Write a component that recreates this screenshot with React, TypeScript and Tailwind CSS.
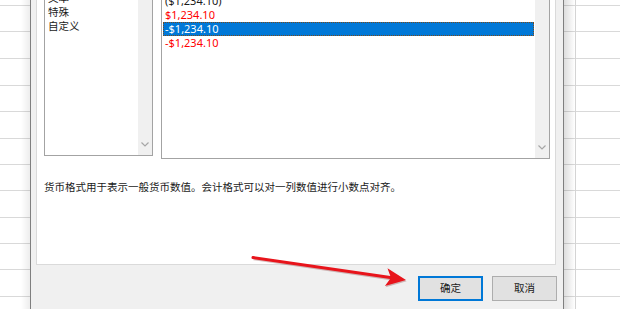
import React from "react";

const rowClasses = [
  "h-[6px]",
  "h-[26px]",
  "h-[27px]",
  "h-[27px]",
  "h-[26px]",
  "h-[27px]",
  "h-[26px]",
  "h-[26px]",
  "h-[27px]",
  "h-[26px]",
  "h-[26px]",
  "h-[27px]",
];

function SheetRows() {
  return (
    <div className="flex flex-col">
      {rowClasses.map((c, i) => (
        <div key={i} className={`${c} border-b border-[#d9d9d9]`} />
      ))}
    </div>
  );
}

function Chevron() {
  return (
    <svg width="8" height="5" viewBox="0 0 8 5" className="block">
      <path d="M0.5 0.5 L4 4 L7.5 0.5" fill="none" stroke="#a6a6a6" strokeWidth="1.2" />
    </svg>
  );
}

function ScrollBar() {
  return (
    <div className="w-[14px] h-full bg-[#f0f0f0] flex flex-col justify-end items-center pb-[8px]">
      <Chevron />
    </div>
  );
}

export default function App() {
  const cjk = "font-['Noto_Sans','Noto_Sans_CJK_SC',sans-serif]";
  return (
    <div className={`relative w-[620px] h-[309px] overflow-hidden bg-white flex ${cjk} text-[#1a1a1a]`}>
      {/* left spreadsheet */}
      <div className="relative w-[30px] shrink-0 h-full">
        <SheetRows />
        <div className="absolute inset-y-0 right-0 w-[9px] bg-gradient-to-r from-transparent to-[#00000012]" />
      </div>

      {/* dialog */}
      <div className="w-[534px] shrink-0 h-full bg-[#f0f0f0] border-l border-r border-[#7f7f7f] flex flex-col">
        <div className="pl-[5px]">
          <div className="w-[520px] h-[265px] bg-white border-l border-r border-b border-[#dadada] flex flex-col">
            <div className="flex items-start">
              {/* category list */}
              <div className="ml-[7px] w-[109px] h-[156px] border-l border-r border-b border-[#a3a3a3] flex">
                <div className="flex-1 overflow-hidden">
                  <div className="-mt-[9px] flex flex-col text-[10.5px]">
                    <div className="h-[14px] leading-[14px] pl-[3px]">文本</div>
                    <div className="h-[14px] leading-[14px] pl-[3px]">特殊</div>
                    <div className="h-[14px] leading-[14px] pl-[3px]">自定义</div>
                  </div>
                </div>
                <ScrollBar />
              </div>

              {/* negative numbers list */}
              <div className="ml-[8px] w-[389px] h-[159px] border-l border-r border-b border-[#a3a3a3] flex">
                <div className="flex-1 overflow-hidden">
                  <div className="-mt-[6px] flex flex-col text-[11px] px-[1px]">
                    <div className="h-[14px] leading-[14px] pl-[2px] text-[#1a1a1a]">($1,234.10)</div>
                    <div className="h-[14px] leading-[14px] pl-[2px] text-[#ff0000]">$1,234.10</div>
                    <div className="h-[14px] leading-[14px] pl-[2px] bg-[#0078d7] text-white outline-1 outline-dotted outline-[#7a4a1a] -outline-offset-1">-$1,234.10</div>
                    <div className="h-[14px] leading-[14px] pl-[2px] text-[#ff0000]">-$1,234.10</div>
                  </div>
                </div>
                <ScrollBar />
              </div>
            </div>

            <div className="mt-[21px] ml-[7px] text-[10.5px] leading-[14px]">
              货币格式用于表示一般货币数值。会计格式可以对一列数值进行小数点对齐。
            </div>
          </div>
        </div>

        <div className="mt-[11px] flex justify-end gap-[9px] pr-[6px]">
          <button className="w-[65px] h-[25px] bg-[#e1e1e1] border border-[#0078d7] shadow-[inset_0_0_0_1px_#0078d7] text-[10.5px] text-[#1a1a1a] flex items-center justify-center">
            确定
          </button>
          <button className="w-[65px] h-[25px] bg-[#e1e1e1] border border-[#adadad] text-[10.5px] text-[#1a1a1a] flex items-center justify-center">
            取消
          </button>
        </div>
      </div>

      {/* right spreadsheet */}
      <div className="relative flex-1 h-full">
        <SheetRows />
        <div className="absolute inset-y-0 left-[11px] w-px bg-[#d4d4d4]" />
        <div className="absolute inset-y-0 left-0 w-[11px] bg-gradient-to-r from-[#00000022] to-transparent" />
      </div>

      {/* red arrow annotation */}
      <svg className="absolute inset-0 pointer-events-none" width="620" height="309" viewBox="0 0 620 309">
        <g opacity="0.25" transform="translate(0.6,1.2)">
          <line x1="253" y1="257.5" x2="392" y2="277.8" stroke="#600" strokeWidth="3" />
          <polygon points="406,280 387.5,268.2 391,277.7 384.9,286" fill="#600" />
        </g>
        <line x1="253" y1="257.5" x2="392" y2="277.8" stroke="#e8141b" strokeWidth="3" strokeLinecap="round" />
        <polygon points="406,280 387.5,268.2 391,277.7 384.9,286" fill="#e8141b" />
      </svg>
    </div>
  );
}
